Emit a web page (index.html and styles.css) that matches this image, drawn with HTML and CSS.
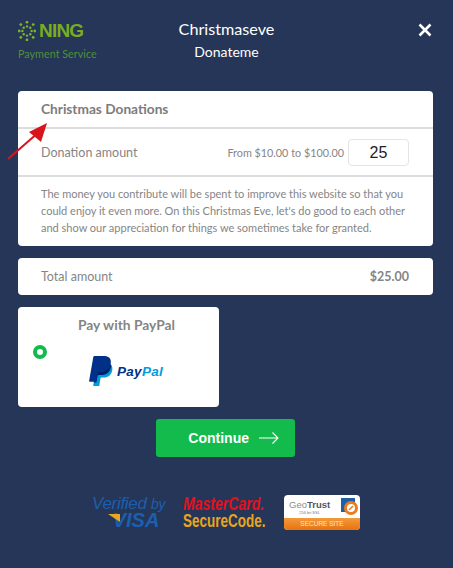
FILE: index.html
```html
<!DOCTYPE html>
<html>
  <head>
    <meta name="viewport" content="width=device-width, initial-scale=1.0">
    <title>Ning Payment Service</title>
    <link rel="stylesheet" href="styles.css">
  </head>
  <body>
    <!-- Header -->
    <div class="header">
      <div class="brand">
        <div class="brand-top">
          <svg class="brand-mark" width="18" height="20" viewBox="0 0 18 20">
            <g fill="#7fb32a">
              <circle cx="9" cy="1.200" r="1.400"/><circle cx="15.200" cy="3.600" r="1.400"/><circle cx="16.800" cy="10" r="1.400"/><circle cx="15.200" cy="16.400" r="1.400"/>
              <circle cx="9" cy="18.800" r="1.400"/><circle cx="2.800" cy="16.400" r="1.400"/><circle cx="1.200" cy="10" r="1.400"/><circle cx="2.800" cy="3.600" r="1.400"/>
              <circle cx="9" cy="5.400" r="1.200"/><circle cx="12.300" cy="6.700" r="1.200"/><circle cx="13.600" cy="10" r="1.200"/><circle cx="12.300" cy="13.300" r="1.200"/>
              <circle cx="9" cy="14.600" r="1.200"/><circle cx="5.700" cy="13.300" r="1.200"/><circle cx="4.400" cy="10" r="1.200"/><circle cx="5.700" cy="6.700" r="1.200"/>
            </g>
          </svg>
          <span class="brand-name">NING</span>
        </div>
        <div class="brand-sub">Payment Service</div>
      </div>
      <div class="titles">
        <div class="title">Christmaseve</div>
        <div class="subtitle">Donateme</div>
      </div>
      <svg class="close" width="14" height="14" viewBox="0 0 14 14">
        <path d="M1.500 1.500l11 11M12.500 1.500l-11 11" stroke="#fff" stroke-width="2.600" fill="none"/>
      </svg>
    </div>

    <!-- Order -->
    <div class="content">
      <div class="card">
        <div class="card-head">Christmas Donations</div>
        <div class="amount-row">
          <span>Donation amount</span>
          <div class="amount-right">
            <span class="range">From $10.00 to $100.00</span>
            <div class="amount-input">25</div>
          </div>
        </div>
        <p class="desc">The money you contribute will be spent to improve this website so that you could enjoy it even more. On this Christmas Eve, let's do good to each other and show our appreciation for things we sometimes take for granted.</p>
      </div>

      <div class="card total">
        <span>Total amount</span>
        <b>$25.00</b>
      </div>

      <div class="card pay">
        <div class="pay-title">Pay with PayPal</div>
        <div class="radio"></div>
        <div class="paypal">
          <svg width="24" height="30" viewBox="0 0 24 30">
            <path fill="#009cde" d="M8 7h9c4 0 7 2 6.300 7-.8 5-4.300 7.500-8.500 7.500h-2.300c-.6 0-1 .4-1.100 1L10.300 30H4.800c-.4 0-.7-.4-.6-.8z"/>
            <path fill="#012169" d="M8 7h8.500c2.500 0 4.700.7 5.700 2.300-.2 5.600-3.700 9.600-9.200 9.600H9.700c-.6 0-1 .4-1.100 1l-1.300 6.600H5z"/>
            <path fill="#003087" d="M5.500 0h9.300c4.700 0 7.700 2.200 7 7.300-.8 5.600-4.700 8.600-9.500 8.600H9.700c-.6 0-1 .4-1.100 1L7.200 25.800H.7c-.4 0-.7-.4-.6-.8L4.300 1c.1-.6.600-1 1.200-1z"/>
          </svg>
          <span class="paypal-word"><span class="pay-dark">Pay</span><span class="pay-light">Pal</span></span>
        </div>
      </div>

      <div class="actions">
        <div class="continue">
          Continue
          <svg width="20" height="12" viewBox="0 0 20 12">
            <path d="M0 6h19M13.500 .5L19 6l-5.500 5.500" stroke="#fff" stroke-width="1.100" fill="none"/>
          </svg>
        </div>
      </div>

      <!-- Badges -->
      <div class="badges">
        <div class="visa">
          <div class="visa-top">Verified <small>by</small></div>
          <div class="visa-bottom">VISA</div>
        </div>
        <div class="mc">
          <div class="mc-top">MasterCard.</div>
          <div class="mc-bottom">SecureCode.</div>
        </div>
        <div class="geo">
          <div class="geo-top">
            <div class="geo-text">
              <div class="geo-name">Geo<b>Trust</b></div>
              <div class="geo-ssl">256 bit SSL</div>
            </div>
            <svg width="17" height="17" viewBox="0 0 17 17">
              <rect width="14" height="14" fill="#1d5fa8"/>
              <circle cx="10" cy="10" r="5.500" fill="#fff" stroke="#ee7a1c" stroke-width="3"/>
              <path d="M8 12l4-4" stroke="#ee7a1c" stroke-width="1.500"/>
            </svg>
          </div>
          <div class="geo-bar">SECURE SITE</div>
        </div>
      </div>
    </div>

    <!-- Annotation -->
    <svg class="arrow" width="44" height="40" viewBox="0 0 44 40">
      <path d="M1 38L32 11" stroke="#d8141c" stroke-width="2" fill="none"/>
      <path d="M40 2L34 21 22 11z" fill="#d8141c"/>
    </svg>
  </body>
</html>
```

FILE: styles.css
```css
html, body { height: 100%; }

body {
  margin: 0px;
  background-color: #253658;
  font-family: Lato, "Open Sans", sans-serif;
  color: #858585;
  overflow: hidden;
  position: relative;
}

.header {
  display: grid;
  grid-template-columns: 1fr auto 1fr;
  height: 91px;
  padding: 18px 18px 0px 18px;
  box-sizing: border-box;
}

.brand-top {
  display: flex;
  align-items: center;
  gap: 3px;
  height: 24px;
  margin-top: 1px;
}

.brand-name {
  font-family: "Liberation Sans", sans-serif;
  font-size: 19px;
  font-weight: bold;
  letter-spacing: -0.8px;
  color: #78ad1f;
}

.brand-sub {
  margin-top: 4px;
  font-size: 10.800px;
  color: #4f8f3a;
  white-space: nowrap;
}

.titles {
  text-align: center;
  color: white;
}

.title {
  font-size: 16.200px;
  line-height: 22px;
}

.subtitle {
  font-size: 14px;
  line-height: 24px;
}

.close {
  justify-self: end;
  margin-top: 5px;
  margin-right: 3px;
}

.content {
  padding: 0px 20px 0px 18px;
}

.card {
  background-color: white;
  border-radius: 4px;
  font-size: 12.500px;
}

.card-head {
  height: 36px;
  line-height: 36px;
  padding-left: 23px;
  font-size: 13.700px;
  font-weight: bold;
  color: #7c7c7c;
}

.amount-row {
  display: flex;
  justify-content: space-between;
  align-items: center;
  height: 46px;
  padding: 0px 24px 0px 23px;
  border-top: 2px solid #dcdcdc;
  border-bottom: 2px solid #dcdcdc;
}

.amount-right {
  display: flex;
  align-items: center;
  gap: 4px;
}

.range { font-size: 10.800px; }

.amount-input {
  width: 59px;
  height: 25px;
  line-height: 25px;
  border: 1px solid #e4e4e4;
  border-radius: 4px;
  text-align: center;
  font-family: "Liberation Sans", sans-serif;
  font-size: 16px;
  color: #222222;
}

.desc {
  margin: 0px;
  padding: 8px 24px 10px 23px;
  font-size: 11px;
  line-height: 17px;
  height: 51px;
}

.total {
  display: flex;
  justify-content: space-between;
  align-items: center;
  height: 37px;
  margin-top: 12px;
  padding: 0px 24px 0px 23px;
}

.pay {
  position: relative;
  width: 201px;
  height: 100px;
  margin-top: 12px;
}

.pay-title {
  padding-top: 9px;
  padding-left: 16px;
  text-align: center;
  font-size: 13.800px;
  font-weight: bold;
  color: #858585;
}

.radio {
  position: absolute;
  left: 15px;
  top: 38px;
  width: 6px;
  height: 6px;
  border: 4px solid #12bb4c;
  border-radius: 50%;
}

.paypal {
  display: flex;
  align-items: center;
  justify-content: center;
  gap: 4px;
  margin-top: 23px;
  padding-left: 15px;
}

.paypal-word {
  font-family: "Liberation Sans", sans-serif;
  font-size: 13.500px;
  font-weight: bold;
  font-style: italic;
  letter-spacing: 0.3px;
}

.pay-dark { color: #003087; }
.pay-light { color: #009cde; }

.actions {
  display: flex;
  justify-content: center;
  margin-top: 12px;
}

.continue {
  display: flex;
  align-items: center;
  justify-content: flex-end;
  gap: 10px;
  width: 139px;
  height: 38px;
  padding-right: 16px;
  box-sizing: border-box;
  background-color: #12bb4c;
  border-radius: 3px;
  font-family: "Liberation Sans", sans-serif;
  font-size: 14px;
  font-weight: bold;
  color: white;
}

.badges {
  display: flex;
  justify-content: center;
  align-items: center;
  gap: 18px;
  margin-top: 38px;
  padding-left: 1px;
}

.visa {
  width: 73px;
  font-family: "Liberation Sans", sans-serif;
  font-style: italic;
  color: #1c5fae;
  text-align: center;
}

.visa-top {
  font-size: 17px;
  line-height: 16px;
  letter-spacing: -0.3px;
  white-space: nowrap;
}

.visa-top small { font-size: 14px; }

.visa-bottom {
  position: relative;
  font-size: 20px;
  line-height: 17px;
  font-weight: bold;
  padding-left: 15px;
}

.visa-bottom::before {
  content: "";
  position: absolute;
  left: 16px;
  top: 2px;
  width: 12px;
  height: 8px;
  background-color: #e5a823;
  clip-path: polygon(0 0, 100% 0, 100% 100%);
}

.mc {
  width: 83px;
  font-family: "Liberation Sans", sans-serif;
  font-weight: bold;
  font-size: 18px;
  line-height: 17px;
  white-space: nowrap;
}

.mc-top {
  color: #e3101c;
  font-style: italic;
  transform: scaleX(0.78);
  transform-origin: left;
}

.mc-bottom {
  color: #e9a51c;
  transform: scaleX(0.75);
  transform-origin: left;
}

.geo {
  width: 76px;
  height: 35px;
  border-radius: 4px;
  overflow: hidden;
  background-color: white;
  font-family: "Liberation Sans", sans-serif;
}

.geo-top {
  display: flex;
  justify-content: space-between;
  align-items: center;
  height: 23px;
  padding: 0px 2px 0px 5px;
}

.geo-name {
  font-size: 9.500px;
  color: #8b8b8b;
  white-space: nowrap;
}

.geo-name b { color: #555555; }

.geo-ssl {
  font-size: 4px;
  text-align: center;
  color: #777777;
}

.geo-bar {
  height: 12px;
  line-height: 12px;
  background: linear-gradient(#f39a3a, #e8730f);
  color: #fbe3c8;
  font-size: 6.500px;
  text-align: center;
}

.arrow {
  position: absolute;
  left: 7px;
  top: 121px;
}
```
